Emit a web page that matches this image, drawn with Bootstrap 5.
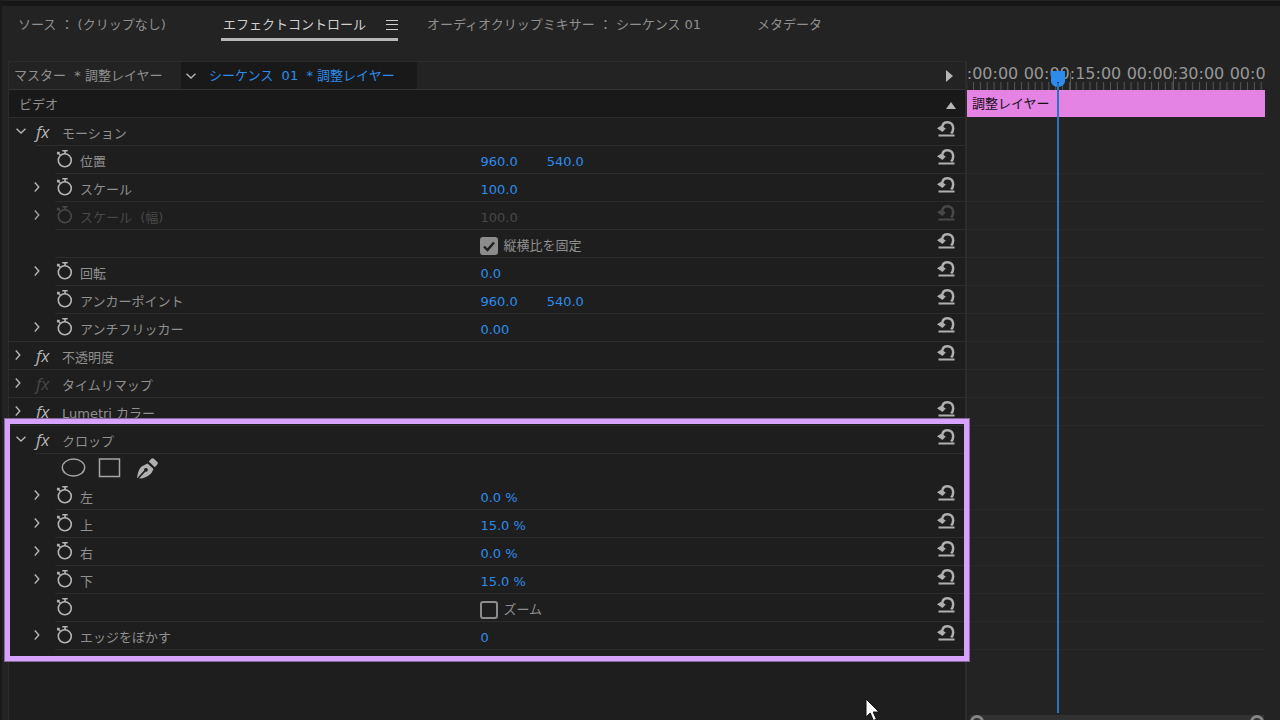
<!DOCTYPE html>
<html lang="ja" data-bs-theme="dark">
<head>
<meta charset="utf-8">
<meta name="viewport" content="width=device-width, initial-scale=1">
<title>エフェクトコントロール</title>
<link href="https://cdn.jsdelivr.net/npm/bootstrap@5.3.0/dist/css/bootstrap.min.css" rel="stylesheet">
<style>
:root{--text:#8f8f8f;--hot:#2d8ceb;--line:#2c2c2c}
body{background:#232323;color:var(--text);font:13px/20px "DejaVu Sans","Noto Sans CJK JP",sans-serif}
button{border:0;background:none;padding:0;color:inherit;line-height:inherit}
a{text-decoration:none;color:inherit}
svg{display:block;fill:none;stroke:currentColor}
.app{border-left:2px solid #191919}
.topbar{height:6px;background:#161616;border-top:1px solid #242424}
.tabs{height:55px;padding:9px 0 0 16px}
.tabs .current{color:#d0d0d0;border-bottom:3px solid #b8b8b8;padding:0 0 3px 2px;margin-left:-2px}
.tab-a{width:205px}.tab-b{width:204px}.tab-c{width:330px}
.panes{padding:0 15px 0 6px}
.effects{background:#1e1e1e;border:solid var(--line);border-width:1px 2px 0 1px;min-width:0}
.head{height:28px;background:#232323;border-bottom:1px solid #333}
.head .clipname{background:#191919;color:var(--hot)}
.head button{color:#b5b5b5}
.head span{padding-top:1px}
.master{width:172px;padding-left:5px}
.sequence{width:236px}
.video{height:28px;background:#191919;border-bottom:1px solid var(--line);padding:3px 9px 0 10px}
.fx-row{height:28px;position:relative;--from:0px}
.fx-row::after{content:"";position:absolute;left:var(--from);right:0;bottom:0;height:1px;background:var(--line)}
.open{--from:27px}.prop{--from:46px}.plain::after{display:none}
.name-col{flex:0 0 49%}
.name-col .label-text{padding-top:3px}
.value-col{flex:1;padding:3px 0 0 3px;color:var(--hot)}
.value-col button{margin-right:29px}
.twirl{width:17px;display:grid;place-items:center;margin-right:10px;padding-bottom:3px}
.open .twirl{width:24px;margin-right:3px}
.prop .twirl{width:17px;margin:0 10px 0 19px}
.twirl svg,.watch svg,.fxmark{color:#b5b5b5}
.fxmark{font:italic 17px/20px "Open Sans",sans-serif;width:26px;text-align:left}
.watch{width:25px;padding:0 0 3px 1px}
.undo{color:#b0b0b0;margin-right:10px;padding-bottom:7px}
.off,.off svg,.off .fxmark,.fxmark.off{color:#484848!important}
.off .twirl svg{color:#a0a0a0!important}
.tick-box{appearance:none;width:18px;height:18px;border:2px solid #8c8c8c;border-radius:3px;margin:0 5px 0 0;display:inline-block}
.tick-box:checked{background:#8c8c8c url("data:image/svg+xml,%3Csvg xmlns='http://www.w3.org/2000/svg' viewBox='0 0 14 14'%3E%3Cpath d='M2 7.5 5.5 11 12 3.5' fill='none' stroke='%231e1e1e' stroke-width='2.4'/%3E%3C/svg%3E")}
.check-label{color:var(--text);padding-top:1px}
.marked{position:relative}
.marked::after{content:"";position:absolute;inset:-7px -4px -11px -4px;border:5px solid #d7a2fb;box-shadow:0 0 0 1px #86689f;pointer-events:none;z-index:3}
.masks{padding-left:52px;color:#a6a6a6;gap:12px}
.timeline{width:298px;position:relative}
.ruler{height:29px;position:relative;overflow:hidden}
.ruler svg{position:absolute;inset:0;color:#555}
.times{width:410px;margin-left:-49px;padding-top:1px;font-size:16px;line-height:24px;position:relative}
.times span{flex:0 0 103px;text-align:center;white-space:nowrap;color:#979797}
.strip{height:27px;margin-bottom:1px;background:#e483e3;color:#151015;padding:4px 5px}
.lane{height:28px;border-bottom:1px solid #292929}
.lane.blank{border-color:transparent}
.playhead{position:absolute;left:83px;top:9px;bottom:7px;width:16px}
.playhead::after{content:"";position:absolute;left:7px;top:13px;bottom:0;width:2px;background:#2874c2}
.playhead svg{color:var(--hot);fill:var(--hot);stroke:none;position:relative}
.zoombar{position:absolute;left:3px;right:1px;bottom:0;height:5px;overflow:hidden;background:#313131}
.knob{width:14px;height:14px;border:3px solid #858585;border-radius:50%}
.pointer{position:absolute;right:84px;bottom:-2px}
</style>
</head>
<body>
<svg width="0" height="0" class="position-absolute" aria-hidden="true">
<symbol id="right" viewBox="0 0 8 12"><path d="M1.8 1.5 5.800 6 1.800 10.500" stroke-width="1.4"/></symbol>
<symbol id="down" viewBox="0 0 12 8"><path d="M1.500 1.800 6 6 10.500 1.800" stroke-width="1.4"/></symbol>
<symbol id="watch" viewBox="0 0 17 19"><circle cx="8.800" cy="11.300" r="6.500" stroke-width="1.600"/><path d="M6.300 1.700h5.400M9 1.700V5M1.300 3l3 3M1.300 5.300 3.500 3" stroke-width="1.600"/></symbol>
<symbol id="undo" viewBox="0 0 18 17"><path d="M5 8.500C5.200 4.300 7.200 2.200 10.200 2.200c3.700 0 6 2.600 6 6 0 2.200-.7 3.800-2 5.300" stroke-width="2.500"/><path d="M0 8.300 4 5.800l4.800 2.700L5.500 12z" fill="currentColor" stroke="none"/><path d="M1.500 15.500h16" stroke-width="2"/></symbol>
</svg>
<div class="app d-flex flex-column vh-100 overflow-hidden">
<div class="topbar flex-shrink-0"></div>
<nav class="tabs d-flex flex-shrink-0 align-items-start text-nowrap">
<div class="tab-a"><a href="#">ソース&nbsp;：&nbsp;(クリップなし)</a></div>
<div class="tab-b d-flex"><a href="#" class="current d-flex align-items-center">エフェクトコントロール<svg class="ms-3 me-0" width="16" height="12" viewBox="0 0 16 12"><path d="M4 1.500h12M4 5.500h12M4 10.500h12"/></svg></a></div>
<div class="tab-c"><a href="#">オーディオクリップミキサー&nbsp;：&nbsp;シーケンス 01</a></div>
<div><a href="#">メタデータ</a></div>
</nav>
<main class="panes d-flex flex-grow-1">
<section class="effects flex-grow-1 position-relative">
<div class="head d-flex align-items-stretch text-nowrap">
<div class="master d-flex align-items-center"><span>マスター&nbsp; *&nbsp;調整レイヤー</span></div>
<div class="clipname sequence d-flex align-items-center"><button class="me-2 ps-1" aria-label="クリップを選択"><svg width="12" height="8"><use href="#down"/></svg></button><span class="ps-1">シーケンス&nbsp; 01&nbsp; * 調整レイヤー</span></div>
<button class="ms-auto me-2 pe-1" aria-label="タイムライン表示"><svg width="8" height="12"><path d="M1 0 8 6 1 12z" fill="#b5b5b5" stroke="none"/></svg></button>
</div>
<div class="video d-flex align-items-center justify-content-between"><span>ビデオ</span><button aria-label="折りたたむ"><svg width="10" height="7"><path d="M0 7 5 0l5 7z" fill="#b5b5b5" stroke="none"/></svg></button></div>

<div class="fx-row open d-flex align-items-center"><div class="name-col d-flex align-items-center"><button class="twirl" aria-label="モーションを閉じる"><svg width="12" height="8"><use href="#down"/></svg></button><button class="fxmark">fx</button><span class="label-text">モーション</span></div><div class="value-col"></div><button class="undo" aria-label="リセット"><svg width="18" height="17"><use href="#undo"/></svg></button></div>
<div class="fx-row prop d-flex align-items-center"><div class="name-col d-flex align-items-center"><span class="twirl"></span><button class="watch" aria-label="アニメーション"><svg width="17" height="19"><use href="#watch"/></svg></button><span class="label-text">位置</span></div><div class="value-col"><button>960.0</button><button>540.0</button></div><button class="undo" aria-label="リセット"><svg width="18" height="17"><use href="#undo"/></svg></button></div>
<div class="fx-row prop d-flex align-items-center"><div class="name-col d-flex align-items-center"><button class="twirl" aria-label="開く"><svg width="8" height="12"><use href="#right"/></svg></button><button class="watch" aria-label="アニメーション"><svg width="17" height="19"><use href="#watch"/></svg></button><span class="label-text">スケール</span></div><div class="value-col"><button>100.0</button></div><button class="undo" aria-label="リセット"><svg width="18" height="17"><use href="#undo"/></svg></button></div>
<div class="fx-row prop off d-flex align-items-center"><div class="name-col d-flex align-items-center"><button class="twirl" aria-label="開く"><svg width="8" height="12"><use href="#right"/></svg></button><button class="watch" aria-label="アニメーション" disabled><svg width="17" height="19"><use href="#watch"/></svg></button><span class="label-text">スケール&nbsp; (幅)</span></div><div class="value-col off"><button disabled>100.0</button></div><button class="undo off" aria-label="リセット" disabled><svg width="18" height="17"><use href="#undo"/></svg></button></div>
<div class="fx-row prop d-flex align-items-center"><div class="name-col"></div><div class="value-col d-flex align-items-center"><input class="tick-box" type="checkbox" id="uniform" checked><label class="check-label" for="uniform">縦横比を固定</label></div><button class="undo" aria-label="リセット"><svg width="18" height="17"><use href="#undo"/></svg></button></div>
<div class="fx-row prop d-flex align-items-center"><div class="name-col d-flex align-items-center"><button class="twirl" aria-label="開く"><svg width="8" height="12"><use href="#right"/></svg></button><button class="watch" aria-label="アニメーション"><svg width="17" height="19"><use href="#watch"/></svg></button><span class="label-text">回転</span></div><div class="value-col"><button>0.0</button></div><button class="undo" aria-label="リセット"><svg width="18" height="17"><use href="#undo"/></svg></button></div>
<div class="fx-row prop d-flex align-items-center"><div class="name-col d-flex align-items-center"><span class="twirl"></span><button class="watch" aria-label="アニメーション"><svg width="17" height="19"><use href="#watch"/></svg></button><span class="label-text">アンカーポイント</span></div><div class="value-col"><button>960.0</button><button>540.0</button></div><button class="undo" aria-label="リセット"><svg width="18" height="17"><use href="#undo"/></svg></button></div>
<div class="fx-row prop d-flex align-items-center" style="--from:0px"><div class="name-col d-flex align-items-center"><button class="twirl" aria-label="開く"><svg width="8" height="12"><use href="#right"/></svg></button><button class="watch" aria-label="アニメーション"><svg width="17" height="19"><use href="#watch"/></svg></button><span class="label-text">アンチフリッカー</span></div><div class="value-col"><button>0.00</button></div><button class="undo" aria-label="リセット"><svg width="18" height="17"><use href="#undo"/></svg></button></div>
<div class="fx-row d-flex align-items-center"><div class="name-col d-flex align-items-center"><button class="twirl" aria-label="開く"><svg width="8" height="12"><use href="#right"/></svg></button><button class="fxmark">fx</button><span class="label-text">不透明度</span></div><div class="value-col"></div><button class="undo" aria-label="リセット"><svg width="18" height="17"><use href="#undo"/></svg></button></div>
<div class="fx-row d-flex align-items-center"><div class="name-col d-flex align-items-center"><button class="twirl" aria-label="開く"><svg width="8" height="12"><use href="#right"/></svg></button><button class="fxmark off">fx</button><span class="label-text">タイムリマップ</span></div></div>
<div class="fx-row d-flex align-items-center"><div class="name-col d-flex align-items-center"><button class="twirl" aria-label="開く"><svg width="8" height="12"><use href="#right"/></svg></button><button class="fxmark">fx</button><span class="label-text">Lumetri カラー</span></div><div class="value-col"></div><button class="undo" aria-label="リセット"><svg width="18" height="17"><use href="#undo"/></svg></button></div>

<div class="marked">
<div class="fx-row open d-flex align-items-center"><div class="name-col d-flex align-items-center"><button class="twirl" aria-label="クロップを閉じる"><svg width="12" height="8"><use href="#down"/></svg></button><button class="fxmark">fx</button><span class="label-text">クロップ</span></div><div class="value-col"></div><button class="undo" aria-label="リセット"><svg width="18" height="17"><use href="#undo"/></svg></button></div>
<div class="fx-row plain masks d-flex align-items-center">
<button aria-label="楕円形マスク"><svg width="25" height="20"><ellipse cx="12.500" cy="9.500" rx="11.200" ry="8.500" stroke-width="1.400"/></svg></button>
<button aria-label="長方形マスク"><svg width="23" height="20"><path d="M1.500 1h20v17.500h-20z" stroke-width="1.500"/></svg></button>
<button aria-label="ペンマスク" class="ps-1"><svg width="21" height="21"><path d="M0 20.500C.8 14.500 2 10 5.500 8l5-2.500 6 5.500-2 4C11.500 18.500 7 20.500 2 20.500l6.500-7a1.800 1.800 0 1 0-1.200-1.200z" fill="#b0b0b0" stroke="none"/><path d="m11.800 3.500 3-3.300 1.800.2 4.200 4-.1 1.600-2.900 3.300z" fill="#b0b0b0" stroke="none"/></svg></button>
</div>
<div class="fx-row prop d-flex align-items-center"><div class="name-col d-flex align-items-center"><button class="twirl" aria-label="開く"><svg width="8" height="12"><use href="#right"/></svg></button><button class="watch" aria-label="アニメーション"><svg width="17" height="19"><use href="#watch"/></svg></button><span class="label-text">左</span></div><div class="value-col"><button>0.0 %</button></div><button class="undo" aria-label="リセット"><svg width="18" height="17"><use href="#undo"/></svg></button></div>
<div class="fx-row prop d-flex align-items-center"><div class="name-col d-flex align-items-center"><button class="twirl" aria-label="開く"><svg width="8" height="12"><use href="#right"/></svg></button><button class="watch" aria-label="アニメーション"><svg width="17" height="19"><use href="#watch"/></svg></button><span class="label-text">上</span></div><div class="value-col"><button>15.0 %</button></div><button class="undo" aria-label="リセット"><svg width="18" height="17"><use href="#undo"/></svg></button></div>
<div class="fx-row prop d-flex align-items-center"><div class="name-col d-flex align-items-center"><button class="twirl" aria-label="開く"><svg width="8" height="12"><use href="#right"/></svg></button><button class="watch" aria-label="アニメーション"><svg width="17" height="19"><use href="#watch"/></svg></button><span class="label-text">右</span></div><div class="value-col"><button>0.0 %</button></div><button class="undo" aria-label="リセット"><svg width="18" height="17"><use href="#undo"/></svg></button></div>
<div class="fx-row prop d-flex align-items-center"><div class="name-col d-flex align-items-center"><button class="twirl" aria-label="開く"><svg width="8" height="12"><use href="#right"/></svg></button><button class="watch" aria-label="アニメーション"><svg width="17" height="19"><use href="#watch"/></svg></button><span class="label-text">下</span></div><div class="value-col"><button>15.0 %</button></div><button class="undo" aria-label="リセット"><svg width="18" height="17"><use href="#undo"/></svg></button></div>
<div class="fx-row prop d-flex align-items-center"><div class="name-col d-flex align-items-center"><span class="twirl"></span><button class="watch" aria-label="アニメーション"><svg width="17" height="19"><use href="#watch"/></svg></button></div><div class="value-col d-flex align-items-center"><input class="tick-box" type="checkbox" id="zoom"><label class="check-label" for="zoom">ズーム</label></div><button class="undo" aria-label="リセット"><svg width="18" height="17"><use href="#undo"/></svg></button></div>
<div class="fx-row prop d-flex align-items-center"><div class="name-col d-flex align-items-center"><button class="twirl" aria-label="開く"><svg width="8" height="12"><use href="#right"/></svg></button><button class="watch" aria-label="アニメーション"><svg width="17" height="19"><use href="#watch"/></svg></button><span class="label-text">エッジをぼかす</span></div><div class="value-col"><button>0</button></div><button class="undo" aria-label="リセット"><svg width="18" height="17"><use href="#undo"/></svg></button></div>
</div>
<svg class="pointer" width="16" height="24" viewBox="0 0 16 24"><path d="M1 1v18l4.200-4 3.200 7.500 3-1.300-3.200-7.200H14z" fill="#fff" stroke="#111"/></svg>
</section>
<section class="timeline flex-shrink-0">
<div class="ruler"><svg width="100%" height="29"><defs><pattern id="ticks" x="6" width="6.85" height="29" patternUnits="userSpaceOnUse"><path d="M.5 21v8"/></pattern></defs><rect width="100%" height="29" fill="url(#ticks)" stroke="none"/><path d="M103.500 12v17M206.500 12v17"/></svg>
<div class="times d-flex"><span>00:00:00:00</span><span>00:00:15:00</span><span>00:00:30:00</span><span>00:00:45:00</span></div></div>
<div class="strip">調整レイヤー</div>
<div class="lane blank"></div><div class="lane"></div><div class="lane"></div><div class="lane"></div><div class="lane"></div><div class="lane"></div><div class="lane"></div><div class="lane"></div><div class="lane"></div><div class="lane"></div><div class="lane"></div>
<div class="lane blank"></div><div class="lane blank"></div><div class="lane"></div><div class="lane"></div><div class="lane"></div><div class="lane"></div><div class="lane"></div><div class="lane"></div>
<div class="playhead"><svg width="16" height="17"><path d="M1 1h14v10c0 3-3 6-7 6s-7-3-7-6z"/><path d="M7 12h2v5H7z" fill="#15324e"/></svg></div>
<div class="zoombar d-flex justify-content-between"><span class="knob"></span><span class="knob"></span></div>
</section>
</main>
</div>
<script src="https://cdn.jsdelivr.net/npm/bootstrap@5.3.0/dist/js/bootstrap.bundle.min.js"></script>
</body>
</html>
